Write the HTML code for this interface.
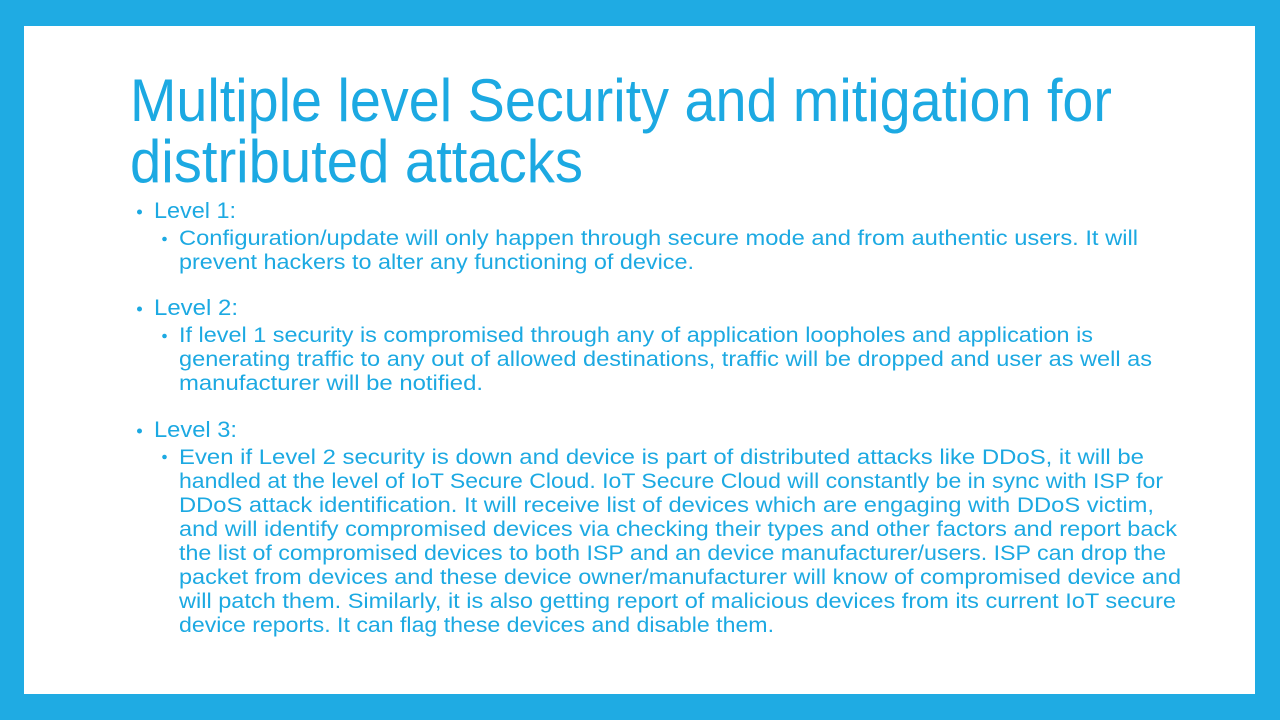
<!DOCTYPE html>
<html><head><meta charset="utf-8"><style>
html,body{margin:0;padding:0;width:1280px;height:720px;overflow:hidden;background:#1fabe3}
svg{display:block}
text{font-family:"Liberation Sans",sans-serif;fill:#1ca9e2}
</style></head><body>
<svg width="1280" height="720" viewBox="0 0 1280 720">
<rect x="0" y="0" width="1280" height="720" fill="#1fabe3"/>
<rect x="24" y="26" width="1231" height="668" fill="#fff"/>
<g font-size="60">
<text x="130" y="121" textLength="982" lengthAdjust="spacingAndGlyphs">Multiple level Security and mitigation for</text>
<text x="130" y="182" textLength="453" lengthAdjust="spacingAndGlyphs">distributed attacks</text>
</g>
<g fill="#1ca9e2">
<circle cx="139.5" cy="212" r="2.5"/><circle cx="139.5" cy="309" r="2.5"/><circle cx="139.5" cy="431" r="2.5"/>
<circle cx="164.5" cy="239" r="2.3"/><circle cx="164.5" cy="336" r="2.3"/><circle cx="164.5" cy="457" r="2.3"/>
</g>
<g font-size="22">
<text x="154" y="218" textLength="82" lengthAdjust="spacingAndGlyphs">Level 1:</text>
<text x="154" y="315" textLength="84" lengthAdjust="spacingAndGlyphs">Level 2:</text>
<text x="154" y="437" textLength="83" lengthAdjust="spacingAndGlyphs">Level 3:</text>
</g>
<g font-size="21">
<text x="179" y="245" textLength="959" lengthAdjust="spacingAndGlyphs">Configuration/update  will only happen through secure mode and from authentic users. It will</text>
<text x="179" y="269" textLength="515" lengthAdjust="spacingAndGlyphs">prevent hackers to alter any functioning of device.</text>
<text x="179" y="342" textLength="914" lengthAdjust="spacingAndGlyphs">If level 1 security is compromised through any of application loopholes and application is</text>
<text x="179" y="366" textLength="973" lengthAdjust="spacingAndGlyphs">generating traffic to any out of allowed destinations, traffic will be dropped and user as well as</text>
<text x="179" y="390" textLength="304" lengthAdjust="spacingAndGlyphs">manufacturer will be notified.</text>
<text x="179" y="464" textLength="965" lengthAdjust="spacingAndGlyphs">Even if Level 2 security is down and device is part of distributed attacks like DDoS, it will be</text>
<text x="179" y="488" textLength="984" lengthAdjust="spacingAndGlyphs">handled at the level of IoT Secure Cloud. IoT Secure Cloud will constantly be in sync with ISP for</text>
<text x="179" y="512" textLength="975" lengthAdjust="spacingAndGlyphs">DDoS attack identification. It will receive list of devices which are engaging with DDoS victim,</text>
<text x="179" y="536" textLength="998" lengthAdjust="spacingAndGlyphs">and will identify compromised devices via checking their types and other factors and report back</text>
<text x="179" y="560" textLength="987" lengthAdjust="spacingAndGlyphs">the list of compromised devices to both ISP and an device manufacturer/users.  ISP can drop the</text>
<text x="179" y="584" textLength="1002" lengthAdjust="spacingAndGlyphs">packet from devices and these device owner/manufacturer  will know of compromised device and</text>
<text x="179" y="608" textLength="997" lengthAdjust="spacingAndGlyphs">will patch them. Similarly, it is also getting report of malicious devices from its current IoT secure</text>
<text x="179" y="632" textLength="595" lengthAdjust="spacingAndGlyphs">device reports.  It can flag these devices and disable them.</text>
</g>
</svg>
</body></html>
